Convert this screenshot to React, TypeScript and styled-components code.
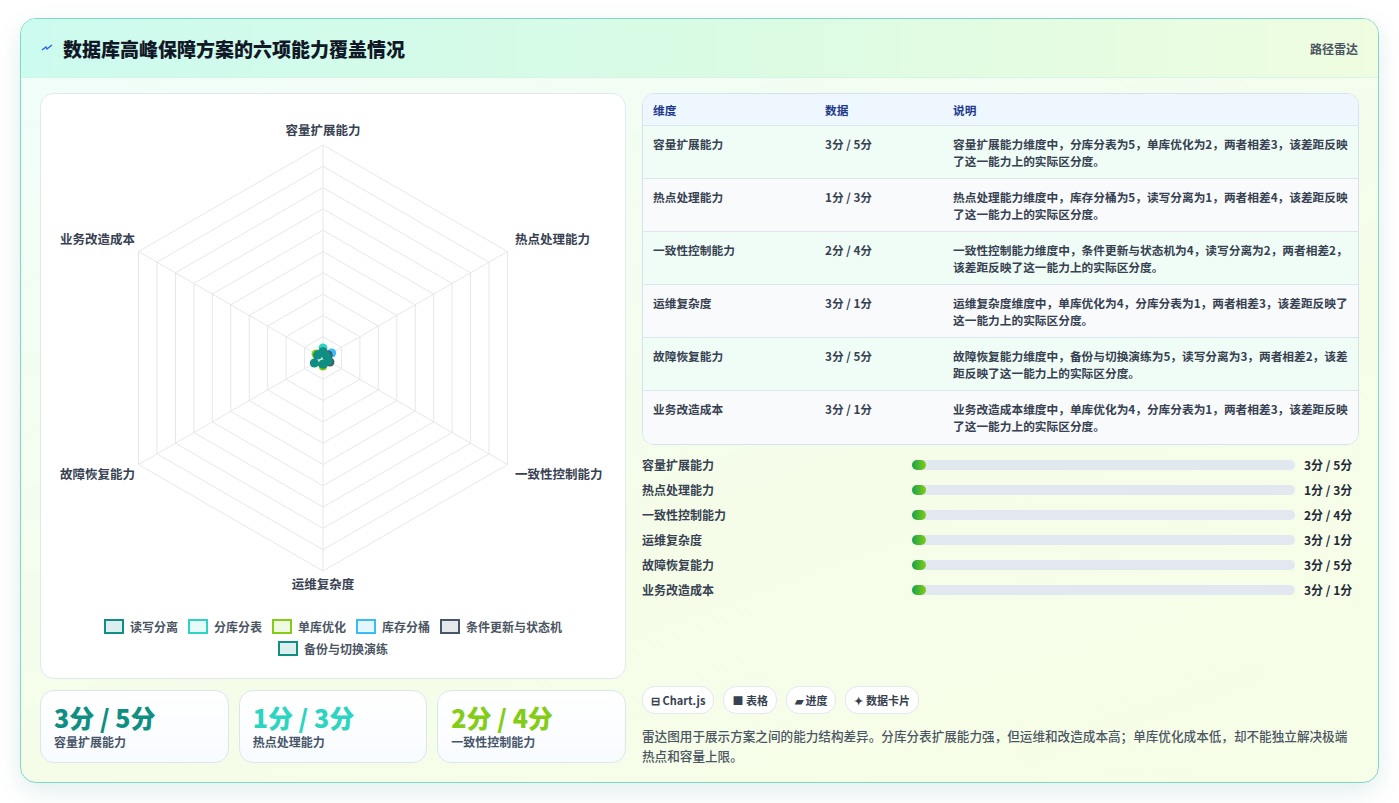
import React from "react"
import styled, { createGlobalStyle } from "styled-components"

const GlobalStyle = createGlobalStyle`
  body {
    margin: 0;
    background: #ffffff;
    font-family: "Noto Sans CJK SC", "Noto Sans", sans-serif;
    color: #1f2937;
  }
`

const Page = styled.div`
  padding: 18px 20px 20px 20px;
  height: 803px;
  box-sizing: border-box;
`

const Frame = styled.div`
  height: 765px;
  box-sizing: border-box;
  border: 1px solid #7dd9c6;
  border-radius: 16px;
  overflow: hidden;
  display: flex;
  flex-direction: column;
  background: linear-gradient(160deg, #f0fdfa 0%, #f5fde9 60%, #f7fee7 100%);
  box-shadow: 0 8px 24px rgba(15, 118, 110, 0.12);
`

const Header = styled.div`
  height: 58px;
  flex: none;
  display: flex;
  align-items: center;
  justify-content: space-between;
  padding: 0 20px;
  background: linear-gradient(90deg, #ccfbef 0%, #d9fbe4 50%, #effde0 100%);
  border-bottom: 1px solid #d7f3e6;
`

const Title = styled.h1`
  margin: 0;
  font-size: 19px;
  font-weight: 800;
  color: #111827;
  display: flex;
  align-items: center;
  gap: 10px;
`

const HeaderTag = styled.span`
  font-size: 12px;
  font-weight: 600;
  color: #4b5563;
`

const Body = styled.div`
  flex: 1;
  display: grid;
  grid-template-columns: 586px 1fr;
  gap: 16px;
  padding: 15px 19px 16px 19px;
  min-height: 0;
`

const LeftCol = styled.div`
  display: flex;
  flex-direction: column;
  gap: 11px;
`

const RadarCard = styled.div`
  height: 586px;
  box-sizing: border-box;
  background: #ffffff;
  border: 1px solid #e2e8f0;
  border-radius: 14px;
  display: flex;
  flex-direction: column;
  align-items: center;
`

const Legend = styled.div`
  display: flex;
  flex-wrap: wrap;
  justify-content: center;
  gap: 5px 10px;
  width: 480px;
  margin-top: 4px;
`

const LegendItem = styled.div`
  display: flex;
  align-items: center;
  gap: 6px;
  font-size: 12px;
  font-weight: 600;
  color: #4b5563;
`

const Swatch = styled.span<{ $c: string; $bg: string }>`
  width: 16px;
  height: 11px;
  border: 2.5px solid ${p => p.$c};
  background: ${p => p.$bg};
`

const StatRow = styled.div`
  display: grid;
  grid-template-columns: repeat(3, 1fr);
  gap: 10px;
`

const StatCard = styled.div`
  height: 73px;
  box-sizing: border-box;
  background: linear-gradient(180deg, #ffffff, #f8fbff);
  border: 1px solid #dbe7f0;
  border-radius: 14px;
  padding: 10px 13px;
`

const StatValue = styled.div<{ $c: string }>`
  font-size: 25px;
  font-weight: 800;
  color: ${p => p.$c};
  line-height: 32px;
`

const StatLabel = styled.div`
  font-size: 12px;
  font-weight: 600;
  color: #475569;
`

const RightCol = styled.div`
  display: flex;
  flex-direction: column;
`

const Table = styled.div`
  border: 1px solid #d6e3ee;
  border-radius: 12px;
  overflow: hidden;
  background: #ffffff;
`

const Row = styled.div<{ $head?: boolean; $alt?: boolean }>`
  display: grid;
  grid-template-columns: 172px 128px 1fr;
  padding: 0 10px;
  min-height: ${p => (p.$head ? "32px" : "53px")};
  align-items: ${p => (p.$head ? "center" : "start")};
  box-sizing: border-box;
  padding-top: ${p => (p.$head ? "0" : "9px")};
  background: ${p => (p.$head ? "#eef6fe" : p.$alt ? "#f8fafc" : "#f0fdf7")};
  border-bottom: 1px solid #dbe5ee;
  font-size: 11.7px;
  font-weight: ${p => (p.$head ? 700 : 600)};
  color: ${p => (p.$head ? "#1e3a8a" : "#374151")};
  line-height: 17px;
  &:last-child { border-bottom: none; }
`

const Bars = styled.div`
  display: flex;
  flex-direction: column;
  gap: 8px;
  margin-top: 11px;
`

const BarRow = styled.div`
  display: grid;
  grid-template-columns: 270px 1fr 64px;
  align-items: center;
  height: 17px;
  font-size: 12px;
  font-weight: 600;
  color: #374151;
`

const Track = styled.div`
  height: 10px;
  background: #e2e8f0;
  border-radius: 5px;
  position: relative;
`

const Fill = styled.div`
  position: absolute;
  left: 0;
  top: 0;
  height: 10px;
  border-radius: 5px;
  background: linear-gradient(90deg, #16a34a, #84cc16);
`

const BarVal = styled.span`
  padding-left: 9px;
  font-weight: 700;
  color: #1f2937;
`

const Chips = styled.div`
  margin-top: auto;
  display: flex;
  gap: 9px;
`

const Chip = styled.span`
  height: 26px;
  padding: 0 8px;
  display: flex;
  align-items: center;
  border: 1px solid #e2e8f0;
  border-radius: 13px;
  background: #ffffff;
  font-size: 11px;
  font-weight: 600;
  color: #374151;
`

const Note = styled.p`
  margin: 12px 0 0 0;
  font-size: 12.6px;
  font-weight: 500;
  line-height: 20px;
  color: #4b5563;
`

const dims = ["容量扩展能力", "热点处理能力", "一致性控制能力", "运维复杂度", "故障恢复能力", "业务改造成本"]

const rows = [
  ["容量扩展能力", "3分 / 5分", "容量扩展能力维度中，分库分表为5，单库优化为2，两者相差3，该差距反映了这一能力上的实际区分度。"],
  ["热点处理能力", "1分 / 3分", "热点处理能力维度中，库存分桶为5，读写分离为1，两者相差4，该差距反映了这一能力上的实际区分度。"],
  ["一致性控制能力", "2分 / 4分", "一致性控制能力维度中，条件更新与状态机为4，读写分离为2，两者相差2，该差距反映了这一能力上的实际区分度。"],
  ["运维复杂度", "3分 / 1分", "运维复杂度维度中，单库优化为4，分库分表为1，两者相差3，该差距反映了这一能力上的实际区分度。"],
  ["故障恢复能力", "3分 / 5分", "故障恢复能力维度中，备份与切换演练为5，读写分离为3，两者相差2，该差距反映了这一能力上的实际区分度。"],
  ["业务改造成本", "3分 / 1分", "业务改造成本维度中，单库优化为4，分库分表为1，两者相差3，该差距反映了这一能力上的实际区分度。"],
]

const series = [
  { name: "读写分离", c: "#0f8f82", bg: "#dcefee", v: [3, 1, 2, 3, 3, 3] },
  { name: "分库分表", c: "#2dd4bf", bg: "#e6fbf7", v: [5, 2, 3, 1, 3, 1] },
  { name: "单库优化", c: "#84cc16", bg: "#effbe0", v: [2, 2, 3, 4, 3, 4] },
  { name: "库存分桶", c: "#38bdf8", bg: "#e4f6fe", v: [3, 5, 3, 2, 3, 2] },
  { name: "条件更新与状态机", c: "#475569", bg: "#e5e7eb", v: [3, 3, 4, 3, 3, 3] },
  { name: "备份与切换演练", c: "#0f8f82", bg: "#dcefee", v: [3, 2, 3, 3, 5, 3] },
]

const CX = 283
const CY = 264
const R = 213

const pt = (i: number, r: number) => {
  const a = -Math.PI / 2 + (i * Math.PI) / 3
  return [CX + r * Math.cos(a), CY + r * Math.sin(a)]
}

const Radar: React.FC = () => {
  const rings = Array.from({ length: 10 }, (_, k) => (R * (k + 1)) / 10)
  const labels: [string, number, number, string][] = [
    [dims[0], CX, 41, "middle"],
    [dims[1], 475, 150, "start"],
    [dims[2], 475, 385, "start"],
    [dims[3], CX, 495, "middle"],
    [dims[4], 95, 385, "end"],
    [dims[5], 95, 150, "end"],
  ]
  return (
    <svg width="586" height="520" viewBox="0 0 586 520">
      {rings.map((r, k) => (
        <polygon key={k} points={[0, 1, 2, 3, 4, 5].map(i => pt(i, r).join(",")).join(" ")} fill="none" stroke="#e5e7eb" strokeWidth="1" />
      ))}
      {[0, 1, 2, 3, 4, 5].map(i => {
        const [x, y] = pt(i, R)
        return <line key={i} x1={CX} y1={CY} x2={x} y2={y} stroke="#e5e7eb" />
      })}
      {series.map((s, k) => (
        <g key={k}>
          <polygon points={s.v.map((v, i) => pt(i, v * 2).join(",")).join(" ")} fill={s.bg} stroke={s.c} strokeWidth="2" />
          {s.v.map((v, i) => {
            const [x, y] = pt(i, v * 2)
            return <circle key={i} cx={x} cy={y} r="4.5" fill={s.c} />
          })}
        </g>
      ))}
      {labels.map(([t, x, y, a]) => (
        <text key={t} x={x} y={y} textAnchor={a as "middle"} fontSize="12.5" fontWeight="600" fill="#374151" fontFamily="Noto Sans CJK SC, sans-serif">{t}</text>
      ))}
    </svg>
  )
}

const App: React.FC = () => (
  <>
    <GlobalStyle />
    <Page>
      <Frame>
        <Header>
          <Title>
            <svg width="12" height="10" viewBox="0 0 12 10"><path d="M1 7 L5 4 L6 6 L11 2" stroke="#2563eb" strokeWidth="1.4" fill="none" /></svg>
            数据库高峰保障方案的六项能力覆盖情况
          </Title>
          <HeaderTag>路径雷达</HeaderTag>
        </Header>
        <Body>
          <LeftCol>
            <RadarCard>
              <Radar />
              <Legend>
                {series.map(s => (
                  <LegendItem key={s.name}><Swatch $c={s.c} $bg={s.bg} />{s.name}</LegendItem>
                ))}
              </Legend>
            </RadarCard>
            <StatRow>
              <StatCard><StatValue $c="#0f8f82">3分 / 5分</StatValue><StatLabel>容量扩展能力</StatLabel></StatCard>
              <StatCard><StatValue $c="#2dd4bf">1分 / 3分</StatValue><StatLabel>热点处理能力</StatLabel></StatCard>
              <StatCard><StatValue $c="#84cc16">2分 / 4分</StatValue><StatLabel>一致性控制能力</StatLabel></StatCard>
            </StatRow>
          </LeftCol>
          <RightCol>
            <Table>
              <Row $head><span>维度</span><span>数据</span><span>说明</span></Row>
              {rows.map((r, i) => (
                <Row key={i} $alt={i % 2 === 1}><span>{r[0]}</span><span>{r[1]}</span><span>{r[2]}</span></Row>
              ))}
            </Table>
            <Bars>
              {rows.map((r, i) => (
                <BarRow key={i}>
                  <span>{r[0]}</span>
                  <Track><Fill style={{ width: "14px" }} /></Track>
                  <BarVal>{r[1]}</BarVal>
                </BarRow>
              ))}
            </Bars>
            <Chips>
              <Chip>⊟ Chart.js</Chip>
              <Chip>■ 表格</Chip>
              <Chip>▰ 进度</Chip>
              <Chip>✦ 数据卡片</Chip>
            </Chips>
            <Note>雷达图用于展示方案之间的能力结构差异。分库分表扩展能力强，但运维和改造成本高；单库优化成本低，却不能独立解决极端热点和容量上限。</Note>
          </RightCol>
        </Body>
      </Frame>
    </Page>
  </>
)

export default App
